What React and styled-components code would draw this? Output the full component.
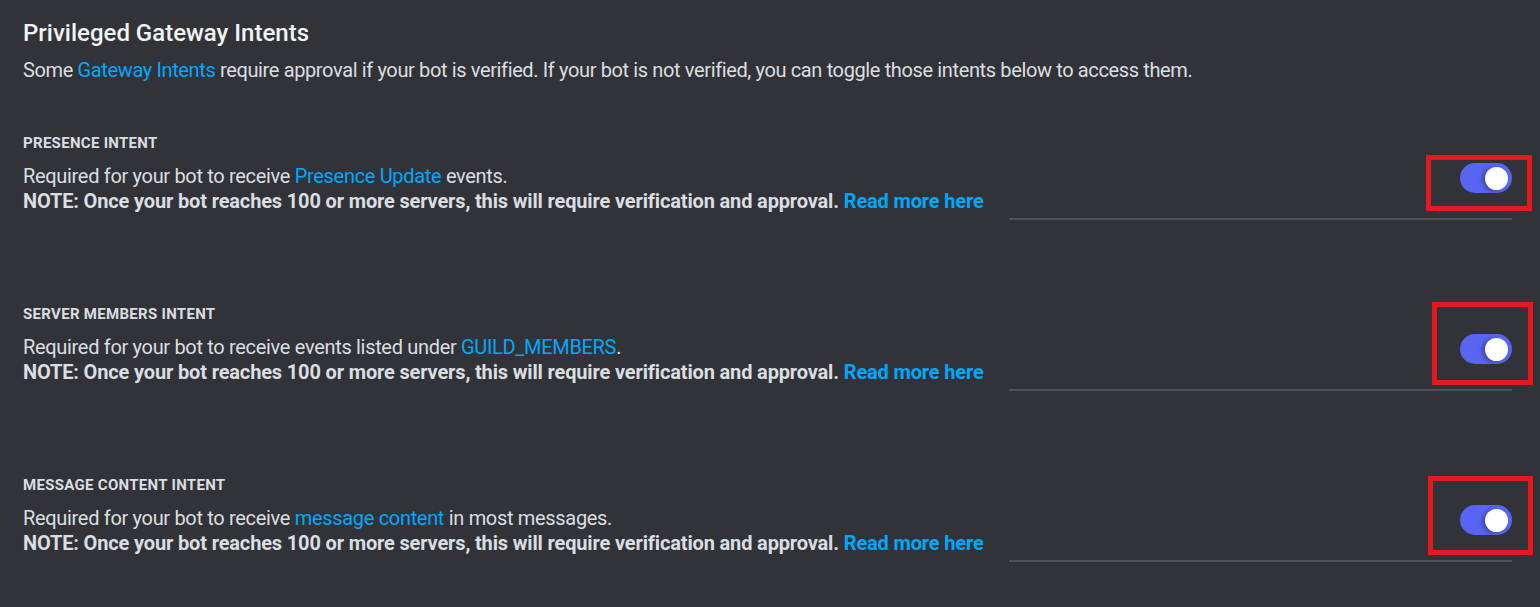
import React from 'react';
import styled, { createGlobalStyle } from 'styled-components';

const GlobalStyle = createGlobalStyle`
  html, body {
    margin: 0;
    padding: 0;
    background: #313338;
  }
  body {
    font-family: Roboto, "Noto Sans", sans-serif;
    color: #dbdee1;
  }
`;

const StyledPage = styled.div`
  width: 1540px;
  height: 607px;
  box-sizing: border-box;
  padding: 18px 28px 0 23px;
  background: #313338;
  overflow: hidden;
`;
const StyledTitle = styled.h2`
  margin: 0;
  font-size: 24px;
  line-height: 30px;
  font-weight: 500;
  color: #f2f3f5;
`;
const StyledLead = styled.p`
  margin: 10px 0 0;
  font-size: 20px;
  line-height: 25px;
  letter-spacing: -0.37px;
  color: #dbdee1;
`;
const StyledLink = styled.a`
  color: #00a8fc;
  text-decoration: none;
  cursor: pointer;
  font-weight: ${p => (p.$bold ? 700 : 'inherit')};
`;
const StyledIntent = styled.section`
  margin-top: ${p => (p.$first ? '51px' : '85px')};
`;
const StyledRow = styled.div`
  display: flex;
  justify-content: space-between;
  align-items: flex-start;
`;
const StyledText = styled.div`
  display: flex;
  flex-direction: column;
`;
const StyledLabel = styled.h3`
  margin: 0 0 12px;
  font-size: 15px;
  line-height: 18px;
  font-weight: 700;
  letter-spacing: 0.3px;
  text-transform: uppercase;
  color: #dbdee1;
`;
const StyledLine = styled.div`
  font-size: 20px;
  line-height: 25px;
  font-weight: ${p => (p.$bold ? 700 : 400)};
  letter-spacing: ${p => (p.$bold ? '-0.15px' : '-0.32px')};
  color: #dbdee1;
`;
const StyledToggleCell = styled.div`
  position: relative;
  margin-top: 29px;
`;
const StyledToggle = styled.button`
  width: 52px;
  height: 30px;
  border: none;
  border-radius: 15px;
  padding: 0;
  background: #5865f2;
  position: relative;
  cursor: pointer;
  display: block;
`;
const StyledKnob = styled.span`
  position: absolute;
  top: 4px;
  right: 4px;
  width: 23px;
  height: 23px;
  border-radius: 50%;
  background: #fff;
  box-shadow: -3px 1px 4px rgba(0, 0, 0, 0.3);
`;
const StyledMarker = styled.div`
  position: absolute;
  border: 5px solid #e3191e;
  pointer-events: none;
`;
const StyledDivider = styled.div`
  margin: 4px 0 0 auto;
  width: 503px;
  height: 2px;
  background: #4e5058;
`;

const note = 'NOTE: Once your bot reaches 100 or more servers, this will require verification and approval. ';

const intents = [
  {
    label: 'Presence Intent',
    before: 'Required for your bot to receive ',
    link: 'Presence Update',
    after: ' events.',
    marker: { left: -34, top: -8, width: 96, height: 46 },
  },
  {
    label: 'Server Members Intent',
    before: 'Required for your bot to receive events listed under ',
    link: 'GUILD_MEMBERS',
    after: '.',
    marker: { left: -28, top: -32, width: 91, height: 73 },
  },
  {
    label: 'Message Content Intent',
    before: 'Required for your bot to receive ',
    link: 'message content',
    after: ' in most messages.',
    marker: { left: -32, top: -29, width: 95, height: 69 },
  },
];

const Intent = ({ intent, first }) => (
  <StyledIntent $first={first}>
    <StyledRow>
      <StyledText>
        <StyledLabel>{intent.label}</StyledLabel>
        <StyledLine>
          {intent.before}
          <StyledLink>{intent.link}</StyledLink>
          {intent.after}
        </StyledLine>
        <StyledLine $bold>
          {note}
          <StyledLink $bold>Read more here</StyledLink>
        </StyledLine>
      </StyledText>
      <StyledToggleCell>
        <StyledToggle aria-pressed="true">
          <StyledKnob />
        </StyledToggle>
        <StyledMarker style={intent.marker} />
      </StyledToggleCell>
    </StyledRow>
    <StyledDivider />
  </StyledIntent>
);

const App = () => (
  <>
    <GlobalStyle />
    <StyledPage>
      <StyledTitle>Privileged Gateway Intents</StyledTitle>
      <StyledLead>
        Some <StyledLink>Gateway Intents</StyledLink> require approval if your bot is verified. If your bot is not verified, you can toggle those intents below to access them.
      </StyledLead>
      {intents.map((intent, i) => (
        <Intent key={intent.label} intent={intent} first={i === 0} />
      ))}
    </StyledPage>
  </>
);

export default App;
